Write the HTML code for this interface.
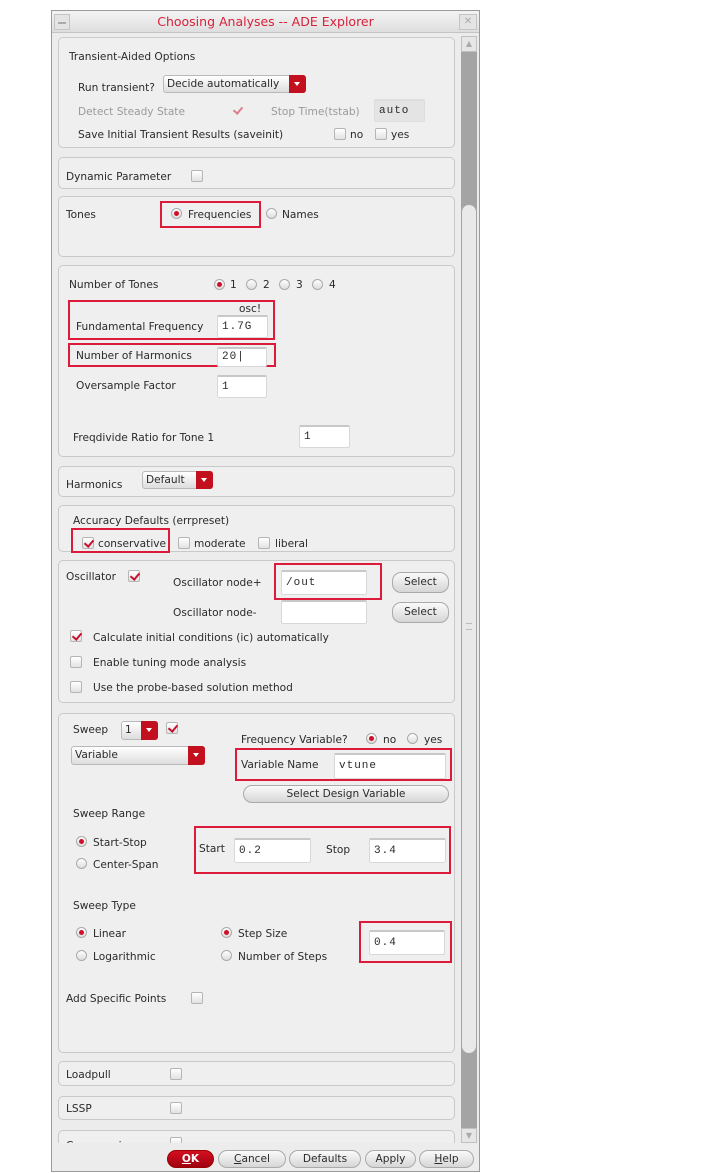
<!DOCTYPE html>
<html><head><meta charset="utf-8"><style>
*{box-sizing:border-box;margin:0;padding:0}
body{width:702px;height:1173px;background:#fff;position:relative;overflow:hidden;font-family:"DejaVu Sans","Liberation Sans",sans-serif;font-size:10.6px;color:#2a2a2a}
div,span{position:absolute}
.t{line-height:14px;white-space:nowrap;margin-top:1px}
.g{color:#9a9a9a}
.p{left:58px;width:397px;border:1px solid #c9c9c9;border-radius:5px;background:#efefef}
.cb{width:12px;height:12px;border:1px solid #b5b5b5;border-radius:2px;background:linear-gradient(#fff,#e2e2e2)}
.ck::after{content:"";position:absolute;left:3px;top:0px;width:4px;height:7px;border:solid #c8102e;border-width:0 2px 2px 0;transform:rotate(40deg)}
.rd{width:11px;height:11px;border:1px solid #aaa;border-radius:50%;background:linear-gradient(#fff,#ddd)}
.on::after{content:"";position:absolute;left:2px;top:2px;width:5px;height:5px;border-radius:50%;background:#d0102a}
.f{background:#fff;border:1px solid #d8d8d8;border-top:2px solid #c8c8c8;border-radius:2px;font-family:"Liberation Mono","DejaVu Sans Mono",monospace;font-size:11px;line-height:20px;padding-left:4px;letter-spacing:1px}
.rb{border:2px solid #dc1a3a}
.dd{border:1px solid #b9b9b9;border-radius:3px;background:linear-gradient(#fff,#ddd);padding-left:3px;line-height:16px;margin-top:0}
.dd i{position:absolute;right:-1px;top:-1px;bottom:-1px;width:17px;background:#c3101e;border-radius:0 3px 3px 0}
.dd i::after{content:"";position:absolute;left:5px;top:7px;border:3px solid transparent;border-top:4px solid #fff}
.bt{border:1px solid #aaa;border-radius:9px;background:linear-gradient(#fafafa,#d6d6d6);text-align:center;line-height:17px}
</style></head><body>
<div style="left:51px;top:10px;width:429px;height:1162px;border:1px solid #9a9a9a;background:#ececec"></div>
<div style="left:52px;top:11px;width:427px;height:22px;background:linear-gradient(#f4f4f4,#dedede);border-bottom:1px solid #c4c4c4"></div>
<div style="left:54px;top:14px;width:16px;height:16px;border:1px solid #c4c4c4;background:#e4e4e4"></div>
<div style="left:58px;top:22px;width:8px;height:2px;background:#aaa"></div>
<div style="left:459px;top:14px;width:18px;height:16px;border:1px solid #c4c4c4;background:#e4e4e4;color:#aaa;font-size:10px;text-align:center;line-height:14px">✕</div>
<div class="t" style="left:52px;width:427px;text-align:center;top:14px;color:#d8203a;font-size:12.5px">Choosing Analyses -- ADE Explorer</div>
<div style="left:461px;top:36px;width:16px;height:1107px;background:#a4a4a4"></div>
<div style="left:461px;top:36px;width:16px;height:16px;background:#e6e6e6;border:1px solid #c0c0c0;color:#aaa;font-size:8px;text-align:center;line-height:14px">▲</div>
<div style="left:461px;top:1128px;width:16px;height:15px;background:#e6e6e6;border:1px solid #c0c0c0;color:#aaa;font-size:8px;text-align:center;line-height:13px">▼</div>
<div style="left:462px;top:205px;width:14px;height:848px;background:#e9e9e9;border-radius:7px"></div>
<div style="left:466px;top:623px;width:6px;height:7px;border-top:1px solid #bbb;border-bottom:1px solid #bbb"></div>

<div class="p" style="top:37px;height:111px"></div>
<div class="t" style="left:69px;top:49px">Transient-Aided Options</div>
<div class="t" style="left:78px;top:80px">Run transient?</div>
<div class="dd t" style="left:163px;top:75px;width:143px;height:18px">Decide automatically<i></i></div>
<div class="t g" style="left:78px;top:104px">Detect Steady State</div>
<div class="ck" style="left:232px;top:105px;width:12px;height:12px;opacity:.5"></div>
<div class="t g" style="left:271px;top:104px">Stop Time(tstab)</div>
<div class="f" style="left:374px;top:99px;width:51px;height:23px;background:#e4e4e4;border-color:#ddd">auto</div>
<div class="t" style="left:78px;top:127px">Save Initial Transient Results (saveinit)</div>
<div class="cb" style="left:334px;top:128px"></div><div class="t" style="left:350px;top:127px">no</div>
<div class="cb" style="left:375px;top:128px"></div><div class="t" style="left:391px;top:127px">yes</div>

<div class="p" style="top:157px;height:32px"></div>
<div class="t" style="left:66px;top:169px">Dynamic Parameter</div>
<div class="cb" style="left:191px;top:170px"></div>

<div class="p" style="top:196px;height:61px"></div>
<div class="t" style="left:66px;top:207px">Tones</div>
<div class="rb" style="left:160px;top:201px;width:101px;height:27px"></div>
<div class="rd on" style="left:171px;top:208px"></div><div class="t" style="left:188px;top:207px">Frequencies</div>
<div class="rd" style="left:266px;top:208px"></div><div class="t" style="left:282px;top:207px">Names</div>

<div class="p" style="top:265px;height:192px"></div>
<div class="t" style="left:69px;top:277px">Number of Tones</div>
<div class="rd on" style="left:214px;top:279px"></div><div class="t" style="left:230px;top:277px">1</div>
<div class="rd" style="left:246px;top:279px"></div><div class="t" style="left:263px;top:277px">2</div>
<div class="rd" style="left:279px;top:279px"></div><div class="t" style="left:296px;top:277px">3</div>
<div class="rd" style="left:312px;top:279px"></div><div class="t" style="left:329px;top:277px">4</div>
<div class="rb" style="left:68px;top:300px;width:207px;height:40px"></div>
<div class="t" style="left:239px;top:301px">osc!</div>
<div class="t" style="left:76px;top:319px">Fundamental Frequency</div>
<div class="f" style="left:217px;top:315px;width:51px;height:23px">1.7G</div>
<div class="rb" style="left:68px;top:343px;width:208px;height:24px"></div>
<div class="t" style="left:76px;top:348px">Number of Harmonics</div>
<div class="f" style="left:217px;top:347px;width:50px;height:20px;line-height:17px">20|</div>
<div class="t" style="left:76px;top:378px">Oversample Factor</div>
<div class="f" style="left:217px;top:375px;width:50px;height:23px">1</div>
<div class="t" style="left:73px;top:430px">Freqdivide Ratio for Tone 1</div>
<div class="f" style="left:299px;top:425px;width:51px;height:23px">1</div>

<div class="p" style="top:466px;height:31px"></div>
<div class="t" style="left:66px;top:477px">Harmonics</div>
<div class="dd t" style="left:142px;top:471px;width:71px;height:18px">Default<i></i></div>

<div class="p" style="top:505px;height:47px"></div>
<div class="t" style="left:73px;top:513px">Accuracy Defaults (errpreset)</div>
<div class="rb" style="left:71px;top:528px;width:99px;height:25px"></div>
<div class="cb ck" style="left:82px;top:537px"></div><div class="t" style="left:98px;top:536px">conservative</div>
<div class="cb" style="left:178px;top:537px"></div><div class="t" style="left:194px;top:536px">moderate</div>
<div class="cb" style="left:258px;top:537px"></div><div class="t" style="left:275px;top:536px">liberal</div>

<div class="p" style="top:560px;height:143px"></div>
<div class="t" style="left:66px;top:569px">Oscillator</div>
<div class="cb ck" style="left:128px;top:570px"></div>
<div class="t" style="left:173px;top:575px">Oscillator node+</div>
<div class="rb" style="left:274px;top:563px;width:108px;height:37px"></div>
<div class="f" style="left:281px;top:570px;width:86px;height:25px;line-height:22px">/out</div>
<div class="bt" style="left:392px;top:572px;width:57px;height:21px;line-height:19px">Select</div>
<div class="t" style="left:173px;top:605px">Oscillator node-</div>
<div class="f" style="left:281px;top:600px;width:86px;height:24px"></div>
<div class="bt" style="left:392px;top:602px;width:57px;height:21px;line-height:19px">Select</div>
<div class="cb ck" style="left:70px;top:630px"></div><div class="t" style="left:93px;top:630px">Calculate initial conditions (ic) automatically</div>
<div class="cb" style="left:70px;top:656px"></div><div class="t" style="left:93px;top:655px">Enable tuning mode analysis</div>
<div class="cb" style="left:70px;top:681px"></div><div class="t" style="left:93px;top:680px">Use the probe-based solution method</div>

<div class="p" style="top:713px;height:340px"></div>
<div class="t" style="left:73px;top:722px">Sweep</div>
<div class="dd t" style="left:121px;top:721px;width:37px;height:19px">1<i></i></div>
<div class="cb ck" style="left:166px;top:722px"></div>
<div class="dd t" style="left:71px;top:746px;width:134px;height:19px">Variable<i></i></div>
<div class="t" style="left:241px;top:732px">Frequency Variable?</div>
<div class="rd on" style="left:366px;top:733px"></div><div class="t" style="left:383px;top:732px">no</div>
<div class="rd" style="left:407px;top:733px"></div><div class="t" style="left:424px;top:732px">yes</div>
<div class="rb" style="left:235px;top:748px;width:217px;height:33px"></div>
<div class="t" style="left:241px;top:757px">Variable Name</div>
<div class="f" style="left:334px;top:753px;width:112px;height:26px;line-height:23px">vtune</div>
<div class="bt" style="left:243px;top:785px;width:206px;height:18px;line-height:16px">Select Design Variable</div>
<div class="t" style="left:73px;top:806px">Sweep Range</div>
<div class="rd on" style="left:76px;top:836px"></div><div class="t" style="left:93px;top:835px">Start-Stop</div>
<div class="rd" style="left:76px;top:858px"></div><div class="t" style="left:93px;top:857px">Center-Span</div>
<div class="rb" style="left:194px;top:826px;width:257px;height:48px"></div>
<div class="t" style="left:199px;top:841px">Start</div>
<div class="f" style="left:234px;top:838px;width:77px;height:25px;line-height:22px">0.2</div>
<div class="t" style="left:326px;top:842px">Stop</div>
<div class="f" style="left:369px;top:838px;width:77px;height:25px;line-height:22px">3.4</div>
<div class="t" style="left:73px;top:898px">Sweep Type</div>
<div class="rd on" style="left:76px;top:927px"></div><div class="t" style="left:93px;top:926px">Linear</div>
<div class="rd" style="left:76px;top:950px"></div><div class="t" style="left:93px;top:949px">Logarithmic</div>
<div class="rd on" style="left:221px;top:927px"></div><div class="t" style="left:238px;top:926px">Step Size</div>
<div class="rd" style="left:221px;top:950px"></div><div class="t" style="left:238px;top:949px">Number of Steps</div>
<div class="rb" style="left:359px;top:921px;width:93px;height:42px"></div>
<div class="f" style="left:369px;top:930px;width:76px;height:25px;line-height:22px">0.4</div>
<div class="t" style="left:66px;top:991px">Add Specific Points</div>
<div class="cb" style="left:191px;top:992px"></div>

<div class="p" style="top:1061px;height:25px"></div>
<div class="t" style="left:66px;top:1067px">Loadpull</div>
<div class="cb" style="left:170px;top:1068px"></div>
<div class="p" style="top:1096px;height:24px"></div>
<div class="t" style="left:66px;top:1101px">LSSP</div>
<div class="cb" style="left:170px;top:1102px"></div>
<div class="p" style="top:1130px;height:30px"></div>
<div class="cb" style="left:170px;top:1137px"></div>
<div class="t" style="left:66px;top:1138px">Compression</div>
<div style="left:52px;top:1143px;width:408px;height:28px;background:#ececec"></div>

<div class="bt" style="left:167px;top:1150px;width:47px;height:18px;background:linear-gradient(#d41020,#a00010);border-color:#900;color:#fff;font-weight:bold;line-height:16px"><u>O</u>K</div>
<div class="bt" style="left:218px;top:1150px;width:68px;height:18px;line-height:16px"><u>C</u>ancel</div>
<div class="bt" style="left:289px;top:1150px;width:72px;height:18px;line-height:16px">Defaults</div>
<div class="bt" style="left:365px;top:1150px;width:51px;height:18px;line-height:16px">Apply</div>
<div class="bt" style="left:419px;top:1150px;width:55px;height:18px;line-height:16px"><u>H</u>elp</div>
</body></html>
